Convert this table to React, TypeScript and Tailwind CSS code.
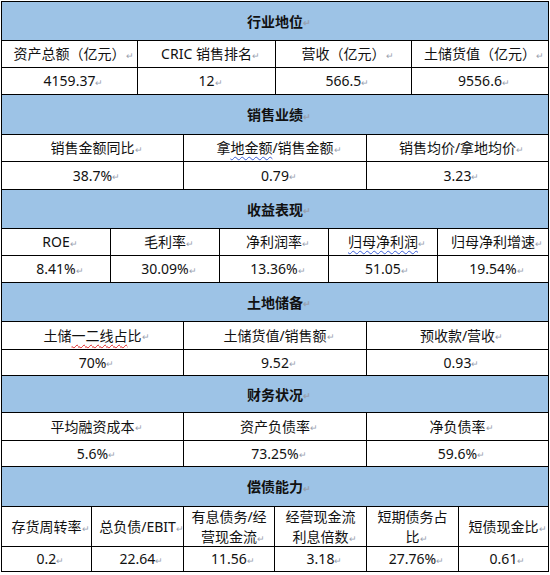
import React from "react";

type Cell = { text: React.ReactNode };

interface Section {
  title: string;
  headerH: string;
  labelH: string;
  valueH: string;
  cols: string;
  labels: React.ReactNode[];
  values: string[];
}

function Mark() {
  return (
    <span className="inline-block w-0 text-[9px] leading-none text-gray-400 align-middle">
      ↵
    </span>
  );
}

const blueWave = "underline decoration-wavy decoration-[#3a5fd9] decoration-1 underline-offset-[3px]";
const redWave = "underline decoration-wavy decoration-[#e02020] decoration-1 underline-offset-[3px]";

const sections: Section[] = [
  {
    title: "行业地位",
    headerH: "h-[39px]",
    labelH: "h-[27px]",
    valueH: "h-[27px]",
    cols: "grid-cols-[136px_138px_136px_136px]",
    labels: ["资产总额（亿元）", "CRIC 销售排名", "营收（亿元）", "土储货值（亿元）"],
    values: ["4159.37", "12", "566.5", "9556.6"],
  },
  {
    title: "销售业绩",
    headerH: "h-[40px]",
    labelH: "h-[27px]",
    valueH: "h-[28px]",
    cols: "grid-cols-[182px_183px_181px]",
    labels: [
      "销售金额同比",
      <>
        拿<span className={blueWave}>地金额</span>/销售金额
      </>,
      "销售均价/拿地均价",
    ],
    values: ["38.7%", "0.79", "3.23"],
  },
  {
    title: "收益表现",
    headerH: "h-[39px]",
    labelH: "h-[27px]",
    valueH: "h-[27px]",
    cols: "grid-cols-[109px_109px_109px_109px_110px]",
    labels: [
      "ROE",
      "毛利率",
      "净利润率",
      <span className={blueWave}>归母净利润</span>,
      "归母净利增速",
    ],
    values: ["8.41%", "30.09%", "13.36%", "51.05", "19.54%"],
  },
  {
    title: "土地储备",
    headerH: "h-[39px]",
    labelH: "h-[28px]",
    valueH: "h-[26px]",
    cols: "grid-cols-[182px_183px_181px]",
    labels: [
      <>
        土储<span className={redWave}>一二线占</span>比
      </>,
      "土储货值/销售额",
      "预收款/营收",
    ],
    values: ["70%", "9.52", "0.93"],
  },
  {
    title: "财务状况",
    headerH: "h-[37px]",
    labelH: "h-[28px]",
    valueH: "h-[26px]",
    cols: "grid-cols-[182px_183px_181px]",
    labels: ["平均融资成本", "资产负债率", "净负债率"],
    values: ["5.6%", "73.25%", "59.6%"],
  },
  {
    title: "偿债能力",
    headerH: "h-[40px]",
    labelH: "h-[40px]",
    valueH: "h-[24px]",
    cols: "grid-cols-[90px_92px_91px_92px_92px_89px]",
    labels: [
      "存货周转率",
      "总负债/EBIT",
      <>
        有息债务/经
        <br />
        营现金流
      </>,
      <>
        经营现金流
        <br />
        利息倍数
      </>,
      <>
        短期债务占
        <br />
        比
      </>,
      "短债现金比",
    ],
    values: ["0.2", "22.64", "11.56", "3.18", "27.76%", "0.61"],
  },
];

function Row({ cols, height, items, last }: { cols: string; height: string; items: React.ReactNode[]; last?: boolean }) {
  return (
    <div className={`grid ${cols} ${height} divide-x divide-black ${last ? "" : "border-b border-black"}`}>
      {items.map((it, i) => (
        <div key={i} className="flex items-center justify-center text-center leading-[20px]">
          <span className="whitespace-nowrap">
            {it}
            <Mark />
          </span>
        </div>
      ))}
    </div>
  );
}

export default function App() {
  return (
    <div
      className="w-[550px] h-[575px] bg-white text-[14px] text-[#111]"
      style={{ fontFamily: '"Noto Sans", "Noto Sans CJK SC", sans-serif' }}
    >
      <div className="ml-px mt-px w-[548px] border border-black">
        {sections.map((s, si) => (
          <div key={s.title}>
            <div
              className={`${s.headerH} bg-[#9dc3e6] border-b border-black flex items-center justify-center font-bold`}
            >
              <span className="whitespace-nowrap">
                {s.title}
                <Mark />
              </span>
            </div>
            <Row cols={s.cols} height={s.labelH} items={s.labels} />
            <Row cols={s.cols} height={s.valueH} items={s.values} last={si === sections.length - 1} />
          </div>
        ))}
      </div>
    </div>
  );
}
